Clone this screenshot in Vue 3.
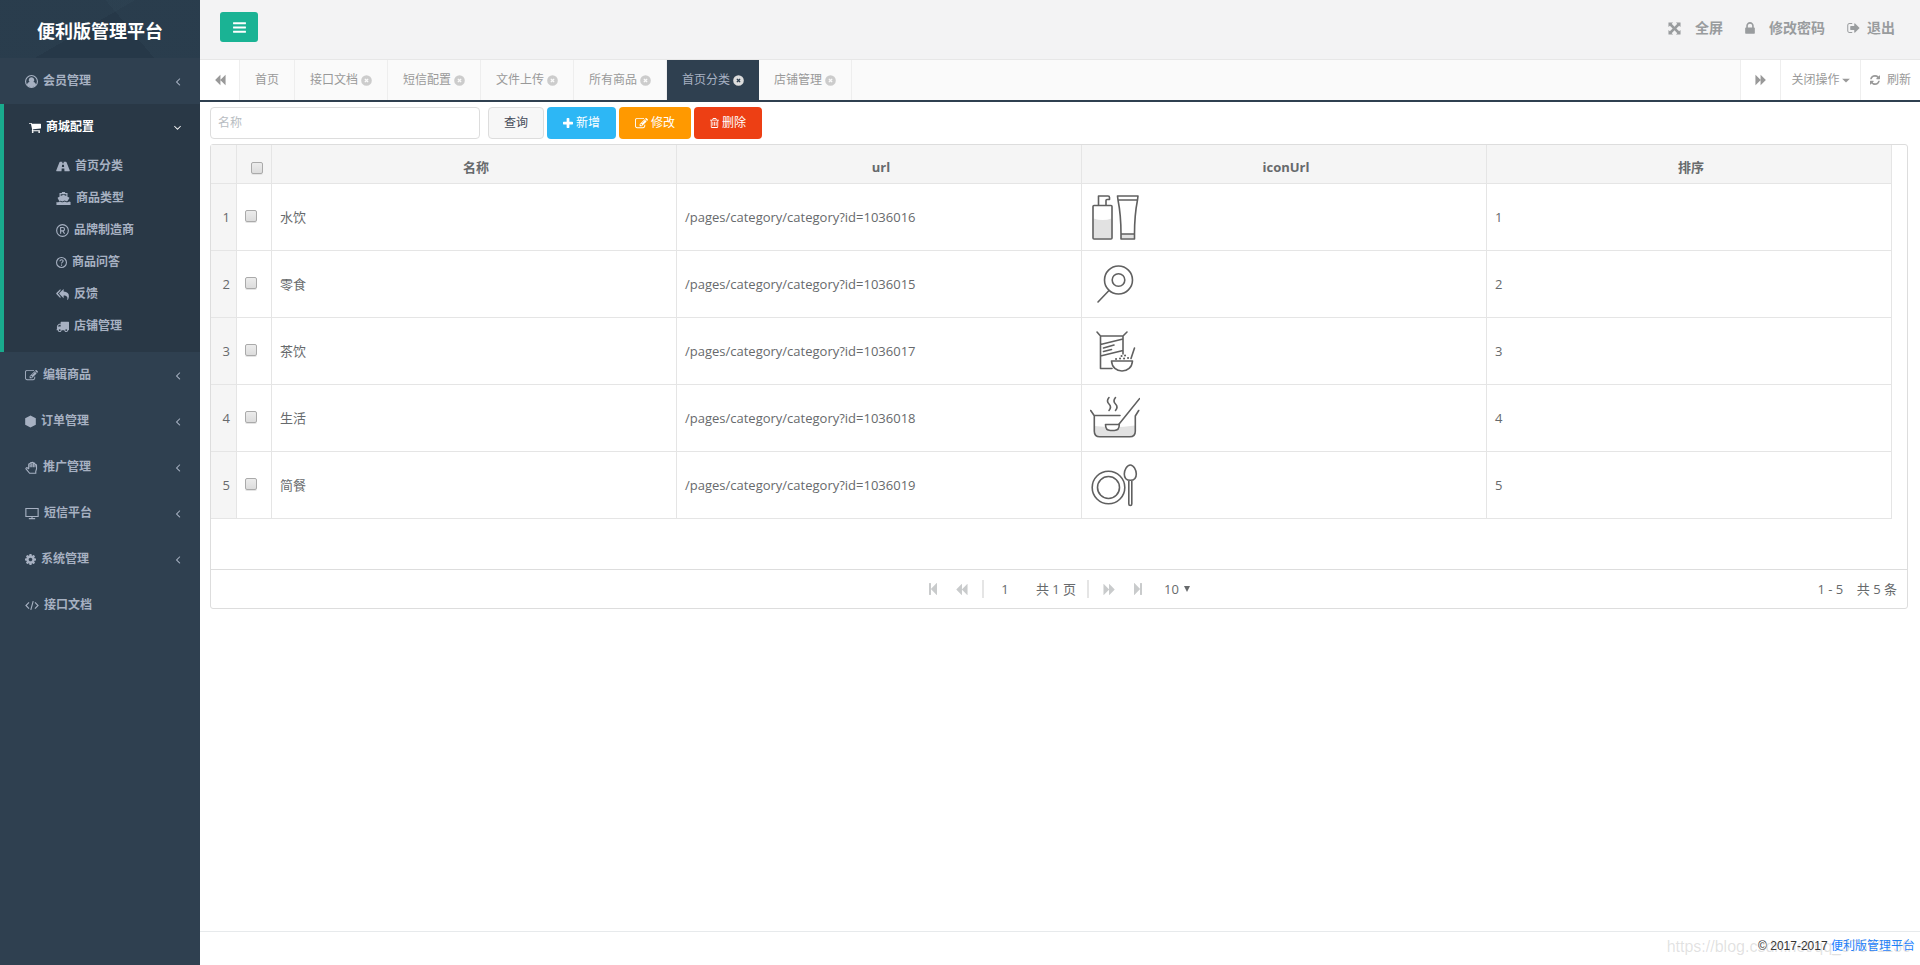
<script setup>
import { h, ref } from 'vue'

/* box: viewBox, d: filled shape, s: stroked shape */
const glyphs = {
  bars: { box: '128 0 1536 1792', d: 'M1664 1344v128q0 26-19 45t-45 19h-1408q-26 0-45-19t-19-45v-128q0-26 19-45t45-19h1408q26 0 45 19t19 45zm0-512v128q0 26-19 45t-45 19h-1408q-26 0-45-19t-19-45v-128q0-26 19-45t45-19h1408q26 0 45 19t19 45zm0-512v128q0 26-19 45t-45 19h-1408q-26 0-45-19t-19-45v-128q0-26 19-45t45-19h1408q26 0 45 19t19 45z' },
  backward: { box: '0 0 1792 1792', d: 'M1683 141q19-19 32-13t13 32v1472q0 26-13 32t-32-13l-710-710q-9-9-13-19v710q0 26-13 32t-32-13l-710-710q-19-19-19-45t19-45l710-710q19-19 32-13t13 32v710q4-10 13-19z' },
  forward: { box: '0 0 1792 1792', d: 'M109 1651q-19 19-32 13t-13-32v-1472q0-26 13-32t32 13l710 710q9 9 13 19v-710q0-26 13-32t32 13l710 710q19 19 19 45t-19 45l-710 710q-19 19-32 13t-13-32v-710q-4 10-13 19z' },
  first: { box: '384 0 1024 1792', d: 'M1363 141q19-19 32-13t13 32v1472q0 26-13 32t-32-13l-710-710q-9-9-13-19v678q0 26-19 45t-45 19h-128q-26 0-45-19t-19-45v-1408q0-26 19-45t45-19h128q26 0 45 19t19 45v678q4-10 13-19z' },
  last: { box: '384 0 1024 1792', d: 'M429 1651q-19 19-32 13t-13-32v-1472q0-26 13-32t32 13l710 710q9 9 13 19v-678q0-26 19-45t45-19h128q26 0 45 19t19 45v1408q0 26-19 45t-45 19h-128q-26 0-45-19t-19-45v-678q-4 10-13 19z' },
  close: { box: '0 0 12 14', d: 'M6 1.200a5.800 5.800 0 1 1 0 11.600A5.800 5.800 0 0 1 6 1.200zM6 6L4.700 4.700 3.700 5.700 5 7 3.700 8.300l1 1L6 8l1.300 1.300 1-1L7 7l1.300-1.300-1-1z' },
  lock: { box: '320 0 1152 1792', d: 'M640 768h512v-192q0-106-75-181t-181-75-181 75-75 181v192zm832 96v576q0 40-28 68t-68 28h-960q-40 0-68-28t-28-68v-576q0-40 28-68t68-28h32v-192q0-184 132-316t316-132 316 132 132 316v192h32q40 0 68 28t28 68z' },
  signout: { box: '64 0 1600 1792', d: 'M704 1440q0 4 1 20t.5 26.5-3 23.5-10 19.5-20.5 6.5h-320q-119 0-203.5-84.5t-84.5-203.5v-704q0-119 84.500-203.500t203.500-84.500h320q13 0 22.500 9.500t9.500 22.500q0 4 1 20t.5 26.500-3 23.500-10 19.500-20.500 6.500h-320q-66 0-113 47t-47 113v704q0 66 47 113t113 47h312l11.500 1 11.500 3 8 5.500 7 9 2 13.500zm928-544q0 26-19 45l-544 544q-19 19-45 19t-45-19-19-45v-288h-448q-26 0-45-19t-19-45v-384q0-26 19-45t45-19h448v-288q0-26 19-45t45-19 45 19l544 544q19 19 19 45z' },
  refresh: { box: '128 0 1536 1792', d: 'M1639 1056q0 5-1 7-64 268-268 434.5t-478 166.5q-146 0-282.5-55t-243.5-157l-129 129q-19 19-45 19t-45-19-19-45v-448q0-26 19-45t45-19h448q26 0 45 19t19 45-19 45l-137 137q71 66 161 102t187 36q134 0 250-65t186-179q11-17 53-117 8-23 30-23h192q13 0 22.5 9.5t9.5 22.5zm25-800v448q0 26-19 45t-45 19h-448q-26 0-45-19t-19-45 19-45l138-138q-148-137-349-137-134 0-250 65t-186 179q-11 17-53 117-8 23-30 23h-199q-13 0-22.5-9.5t-9.5-22.5v-7q65-268 270-434.5t480-166.5q146 0 284 55.5t245 156.5l130-129q19-19 45-19t45 19 19 45z' },
  cart: { box: '64 0 1664 1792', d: 'M704 1536q0 52-38 90t-90 38-90-38-38-90 38-90 90-38 90 38 38 90zm896 0q0 52-38 90t-90 38-90-38-38-90 38-90 90-38 90 38 38 90zm128-1088v512q0 24-16.5 42.5t-40.5 21.5l-1044 122q13 60 13 70 0 16-24 64h920q26 0 45 19t19 45-19 45-45 19h-1024q-26 0-45-19t-19-45q0-11 8-31.5t16-36 21.5-40 15.5-29.5l-177-823h-204q-26 0-45-19t-19-45 19-45 45-19h256q16 0 28.5 6.5t19.5 15.5 13 24.5 8 26 5.5 29.5 4.5 26h1201q26 0 45 19t19 45z' },
  edit: { box: '0 0 1792 1792', d: 'M888 1184l116-116-152-152-116 116v56h96v96h56zm440-720q-16-16-33 1l-350 350q-17 17-1 33t33-1l350-350q17-17 1-33zm80 594v190q0 119-84.5 203.5t-203.5 84.5h-832q-119 0-203.5-84.5t-84.5-203.5v-832q0-119 84.5-203.5t203.5-84.5h832q63 0 117 25 15 7 18 23 3 17-9 29l-49 49q-14 14-32 8-23-6-45-6h-832q-66 0-113 47t-47 113v832q0 66 47 113t113 47h832q66 0 113-47t47-113v-126q0-13 9-22l64-64q15-15 35-7t20 29zm-96-738l288 288-672 672h-288v-288zm444 132l-92 92-288-288 92-92q28-28 68-28t68 28l152 152q28 28 28 68t-28 68z' },
  plus: { box: '192 0 1408 1792', d: 'M1600 736v192q0 40-28 68t-68 28h-416v416q0 40-28 68t-68 28h-192q-40 0-68-28t-28-68v-416h-416q-40 0-68-28t-28-68v-192q0-40 28-68t68-28h416v-416q0-40 28-68t68-28h192q40 0 68 28t28 68v416h416q40 0 68 28t28 68z' },
  trash: { box: '192 0 1408 1792', d: 'M704 736v576q0 14-9 23t-23 9h-64q-14 0-23-9t-9-23v-576q0-14 9-23t23-9h64q14 0 23 9t9 23zm256 0v576q0 14-9 23t-23 9h-64q-14 0-23-9t-9-23v-576q0-14 9-23t23-9h64q14 0 23 9t9 23zm256 0v576q0 14-9 23t-23 9h-64q-14 0-23-9t-9-23v-576q0-14 9-23t23-9h64q14 0 23 9t9 23zm128 724v-948h-896v948q0 22 7 40.5t14.5 27 10.5 8.5h832q3 0 10.5-8.5t14.5-27 7-40.5zm-672-1076h448l-48-117q-7-9-17-11h-317q-10 2-17 11zm928 32v64q0 14-9 23t-23 9h-96v948q0 83-47 143.5t-113 60.5h-832q-66 0-113-58.5t-47-141.5v-952h-96q-14 0-23-9t-9-23v-64q0-14 9-23t23-9h309l70-167q15-37 54-63t79-26h320q40 0 79 26t54 63l70 167h309q14 0 23 9t9 23z' },
  left: { box: '512 0 768 1792', d: 'M1203 544q0 13-10 23l-393 393 393 393q10 10 10 23t-10 23l-50 50q-10 10-23 10t-23-10l-466-466q-10-10-10-23t10-23l466-466q10-10 23-10t23 10l50 50q10 10 10 23z' },
  down: { box: '384 0 1024 1792', d: 'M1395 736q0 13-10 23l-466 466q-10 10-23 10t-23-10l-466-466q-10-10-10-23t10-23l50-50q10-10 23-10t23 10l393 393 393-393q10-10 23-10t23 10l50 50q10 10 10 23z' },
  truck: { box: '0 0 1792 1792', d: 'M640 1408q0-52-38-90t-90-38-90 38-38 90 38 90 90 38 90-38 38-90zm-384-512h384v-256h-158q-13 0-22 9l-195 195q-9 9-9 22v30zm1280 512q0-52-38-90t-90-38-90 38-38 90 38 90 90 38 90-38 38-90zm256-1088v1024q0 15-4 26.5t-13.5 18.5-16.5 11.5-23.5 6-22.5 2-25.5 0-22.5-.5q0 106-75 181t-181 75-181-75-75-181h-384q0 106-75 181t-181 75-181-75-75-181h-64q-3 0-22.5.5t-25.5 0-22.5-2-23.5-6-16.5-11.5-13.5-18.5-4-26.5q0-26 19-45t45-19v-320q0-8-.5-35t0-38 2.5-34.5 6.5-37 14-30.5 22.5-30l198-198q19-19 50.5-32t58.5-13h160v-192q0-26 19-45t45-19h1024q26 0 45 19t19 45z' },
  cog: { box: '128 0 1536 1792', d: 'M1152 896q0-106-75-181t-181-75-181 75-75 181 75 181 181 75 181-75 75-181zm512-109v222q0 12-8 23t-20 13l-185 28q-19 54-39 91 35 50 107 138 10 12 10 25t-9 23q-27 37-99 108t-94 71q-12 0-26-9l-138-108q-44 23-91 38-16 136-29 186-7 28-36 28h-222q-14 0-24.5-8.5t-11.5-21.5l-28-184q-49-16-90-37l-141 107q-10 9-25 9-14 0-25-11-126-114-165-168-7-10-7-23 0-12 8-23 15-21 51-66.5t54-70.5q-27-50-41-99l-183-27q-13-2-21-12.5t-8-23.5v-222q0-12 8-23t19-13l186-28q14-46 39-92-40-57-107-138-10-12-10-24 0-10 9-23 26-36 98.5-107.5t94.5-71.5q13 0 26 10l138 107q44-23 91-38 16-136 29-186 7-28 36-28h222q14 0 24.5 8.5t11.5 21.5l28 184q49 16 90 37l142-107q9-9 24-9 13 0 25 10 129 119 165 170 7 8 7 22 0 12-8 23-15 21-51 66.5t-54 70.5q26 50 41 98l183 28q13 2 21 12.5t8 23.5z' },
  expand: { box: '0 0 14 14', d: 'M.5.5h5L4 2 7 5l3-3L8.500.5h5v5L12 4 9 7l3 3 1.500-1.500v5h-5L10 12 7 9l-3 3 1.500 1.500h-5v-5L2 10l3-3-3-3L.5 5.500z' },
  user: { box: '0 0 14 14', s: 'M13.4 7A6.4 6.4 0 1 1 .6 7a6.4 6.4 0 0 1 12.8 0z', d: 'M7 2.4a3 3 0 0 1 2 5.200c1.700.3 2.700 1.400 2.900 3.200-2.500 2.900-7.300 2.900-9.800 0 .2-1.800 1.200-2.900 2.900-3.200A3 3 0 0 1 7 2.400z' },
  road: { box: '0 0 15 14', d: 'M4.3 2h2.5l-.1 1.6h1.6L8.200 2h2.500q.4 0 .6.4l3.500 8.800q.200.8-.5.8H9.100l-.2-2.800H6.100L5.900 12H.7Q0 12 .2 11.200L3.700 2.400Q3.900 2 4.300 2zM6.500 5l-.2 2.600h2.400L8.500 5z' },
  ship: { box: '0 0 16 14', d: 'M6.300 0h3.400v1.200h2.600v3.800l1.700.8q.5.3.2.8l-1.700 2.900q-1 1-2 .2-1.200-.9-2.500 0t-2.500 0q-1-.8-2 .2L1.800 6.600Q1.500 6.100 2 5.800l1.700-.8V1.200h2.600zM5 2.500v1.900l3-1.400 3 1.400V2.500zM.4 10.700q1.300.9 2.500 0 1.300-.9 2.600 0 1.200.9 2.500 0 1.300-.9 2.500 0 1.300.9 2.600 0 1.200-.9 2.500 0V14H.4z' },
  registered: { box: '0 0 14 14', s: 'M13.300 7A6.300 6.300 0 1 1 .7 7a6.300 6.300 0 0 1 12.600 0zM5 10.500V3.700h2.300a1.800 1.800 0 0 1 0 3.700H5.300M7.300 7.400l1.900 3.100' },
  question: { box: '0 0 12 14', s: 'M11.400 7A5.400 5.400 0 1 1 .6 7a5.400 5.400 0 0 1 10.800 0zM4.200 5.600C4.500 3.500 7.900 3.700 7.800 5.400 7.700 6.600 6 6.600 6 8.200M6 9.200v1.300' },
  reply: { box: '0 0 14 14', d: 'M4.800 1v1.900L2 6l2.800 3.100V11L.4 6.500Q0 6 .4 5.500zM8.200 1v2.700c4 .3 5.800 2.100 5.700 5.100 0 1.500-.6 2.900-1.300 4-.2.200-.5.1-.4-.2.5-3-.6-4.200-4-4.400V11L3.700 6.500q-.4-.5 0-1z' },
  cube: { box: '0 0 12 14', d: 'M6 .5L11.800 3.500v7L6 13.500.2 10.500v-7z' },
  hand: { box: '0 0 14 14', s: 'M4 8.500V3.800c0-1.200 1.600-1.200 1.600 0V2.600c0-1.200 1.700-1.200 1.700 0v-.4c0-1.100 1.700-1.100 1.700 0v.9c0-1.100 1.700-1.100 1.700 0v1.600c0-1 1.700-1.100 1.700.1v3.700l-.8 2.700v2H5L1.300 8.800C.5 7.600 1.900 6.700 2.900 7.600L4 8.600M5.600 4v2.800M7.300 3v3.800M9 3v3.800M10.700 4.500v2.300' },
  tv: { box: '0 0 15 14', s: 'M.9 1.600h13.200v8.600H.9zM7.500 10.200v2M4.100 12.500h6.800' },
  code: { box: '0 0 15 14', s: 'M4.300 3.700L1 7l3.300 3.300M10.700 3.700L14 7l-3.300 3.300M8.800 2.300L6.200 11.700' },
  caret: { box: '0 0 9 14', d: 'M0 5.500h9L4.500 10z' },
  triangle: { box: '0 0 6 6', d: 'M0 0h6L3 6z' },
}

const Icon = (props) => {
  const g = glyphs[props.name]
  const [, , w, hgt] = g.box.split(' ').map(Number)
  return h('svg', {
    class: 'icon',
    viewBox: g.box,
    height: props.size,
    width: Math.round((props.size * w) / hgt),
    'aria-hidden': 'true',
  }, [
    g.d && h('path', { d: g.d, fill: 'currentColor', 'fill-rule': g.box.includes('1792') ? 'nonzero' : 'evenodd' }),
    g.s && h('path', { d: g.s, fill: 'none', stroke: 'currentColor', 'stroke-width': 1.2 }),
  ])
}
Icon.props = { name: String, size: { type: Number, default: 13 } }

const menu = [
  { icon: 'user', text: '会员管理', more: true },
  {
    icon: 'cart', text: '商城配置', open: true, children: [
      { icon: 'road', text: '首页分类' },
      { icon: 'ship', text: '商品类型' },
      { icon: 'registered', text: '品牌制造商' },
      { icon: 'question', text: '商品问答' },
      { icon: 'reply', text: '反馈' },
      { icon: 'truck', text: '店铺管理' },
    ],
  },
  { icon: 'edit', text: '编辑商品', more: true },
  { icon: 'cube', text: '订单管理', more: true },
  { icon: 'hand', text: '推广管理', more: true },
  { icon: 'tv', text: '短信平台', more: true },
  { icon: 'cog', text: '系统管理', more: true },
  { icon: 'code', text: '接口文档' },
]

const tabs = [
  { text: '首页', fixed: true },
  { text: '接口文档' },
  { text: '短信配置' },
  { text: '文件上传' },
  { text: '所有商品' },
  { text: '首页分类', active: true },
  { text: '店铺管理' },
]

const rows = [
  { id: 1, name: '水饮', url: '/pages/category/category?id=1036016', sort: 1 },
  { id: 2, name: '零食', url: '/pages/category/category?id=1036015', sort: 2 },
  { id: 3, name: '茶饮', url: '/pages/category/category?id=1036017', sort: 3 },
  { id: 4, name: '生活', url: '/pages/category/category?id=1036018', sort: 4 },
  { id: 5, name: '简餐', url: '/pages/category/category?id=1036019', sort: 5 },
]

const keyword = ref('')
const page = ref('1')
const pageSize = ref('10')
</script>

<template>
  <div class="app">
    <aside class="sidebar">
      <div class="brand">便利版管理平台</div>
      <nav>
        <ul class="menu">
          <li v-for="item in menu" :key="item.text" :class="{ open: item.open }">
            <a href="#" class="menu-link">
              <Icon :name="item.icon" />
              <span class="menu-text">{{ item.text }}</span>
              <Icon v-if="item.more" name="left" :size="13" />
              <Icon v-if="item.open" name="down" :size="13" />
            </a>
            <ul v-if="item.children" class="submenu">
              <li v-for="sub in item.children" :key="sub.text">
                <a href="#" class="submenu-link"><Icon :name="sub.icon" /><span>{{ sub.text }}</span></a>
              </li>
            </ul>
          </li>
        </ul>
      </nav>
    </aside>

    <div class="page">
      <header class="topbar">
        <button type="button" class="toggle" aria-label="菜单"><Icon name="bars" :size="15" /></button>
        <div class="account">
          <a href="#" class="wide"><Icon name="expand" :size="13" />全屏</a>
          <a href="#" class="wide"><Icon name="lock" :size="15" />修改密码</a>
          <a href="#"><Icon name="signout" :size="14" />退出</a>
        </div>
      </header>

      <div class="tabbar">
        <button type="button" class="scroll" aria-label="向左"><Icon name="backward" :size="12" /></button>
        <nav class="tabs">
          <a v-for="tab in tabs" :key="tab.text" href="#" class="tab" :class="{ active: tab.active }">
            {{ tab.text }}<Icon v-if="!tab.fixed" name="close" />
          </a>
        </nav>
        <button type="button" class="scroll right" aria-label="向右"><Icon name="forward" :size="12" /></button>
        <button type="button" class="closer">关闭操作<Icon name="caret" :size="12" /></button>
        <button type="button" class="reload"><Icon name="refresh" :size="12" />刷新</button>
      </div>

      <main class="content">
        <form class="tools" @submit.prevent>
          <input v-model="keyword" type="text" class="search" placeholder="名称" aria-label="名称">
          <button type="submit" class="btn plain">查询</button>
          <button type="button" class="btn add"><Icon name="plus" />新增</button>
          <button type="button" class="btn modify"><Icon name="edit" />修改</button>
          <button type="button" class="btn remove"><Icon name="trash" :size="12" />删除</button>
        </form>

        <section class="grid">
          <div class="grid-body">
            <table>
              <colgroup><col class="c-num"><col class="c-check"><col><col><col><col></colgroup>
              <thead>
                <tr>
                  <th></th>
                  <th class="check-all"><input type="checkbox" aria-label="全选"></th>
                  <th>名称</th>
                  <th>url</th>
                  <th>iconUrl</th>
                  <th>排序</th>
                </tr>
              </thead>
              <tbody>
                <tr v-for="row in rows" :key="row.id">
                  <td class="num">{{ row.id }}</td>
                  <td class="check"><input type="checkbox" :aria-label="row.name"></td>
                  <td>{{ row.name }}</td>
                  <td>{{ row.url }}</td>
                  <td>
                    <svg class="picture" viewBox="0 0 50 50" width="50" height="50" aria-hidden="true">
                      <g v-if="row.id === 1">
                        <path class="shade" d="M3.500 26.500q9.500 3 18 0V46.500h-18zM31 42h13.500v4.500H31z" />
                        <path d="M4 13.500h17a1 1 0 0 1 1 1V46a1 1 0 0 1-1 1H4a1 1 0 0 1-1-1V14.500a1 1 0 0 1 1-1zM8.500 13.500V4h9.500q1.500 0 1.500 1.500v2H17q-1 0-1 1v5M27.500 4h20.500l-.5 4H28zM28 8q3 15 3 34h13.500q0-19 3-34M31 42v5h13.500v-5" />
                      </g>
                      <g v-else-if="row.id === 2">
                        <circle cx="28.500" cy="21" r="14" /><circle cx="28.500" cy="21" r="6.300" />
                        <path d="M19 31.500L8 43" />
                      </g>
                      <g v-else-if="row.id === 3">
                        <path d="M7 6l3.500 4v32.500h11.500M37 6l-4 4v18M10.500 10H33M10.500 18.500L33 13M10.500 30L33 24.500M13.500 22l10.500-3M13.500 25.500l8-2M44.500 22l-3.500 10.500" />
                        <path d="M21.500 35h21c-.5 6.500-5 10-10.500 10s-10-3.500-10.500-10z" />
                        <path class="dots" d="M26 33h.1M30 32.500h.1M31.500 30h.1M34 32.500h.1M35 29.500h.1M38 32h.1" />
                      </g>
                      <g v-else-if="row.id === 4">
                        <path class="shade" d="M4.500 33q20 2.500 40.500-.500V40q-1 3.500-5 3.500H10q-5 0-5.500-4z" />
                        <path d="M.7 17.500l3.600 5.200v15.500q0 5.500 5.500 5.500h30q5.500 0 5.500-5.500V23l3.400-5.500M4.300 22.500H30M49.500 5.700L28.700 31.500" />
                        <path class="white" d="M15.500 31.500h13.800q0 6-5 6h-4q-4.800 0-4.800-6z" />
                        <path d="M19 4.500q-3 3.500 0 6.500t0 6.500M25.500 4.500q-3 3.500 0 6.500t0 6.500" />
                      </g>
                      <g v-else>
                        <circle cx="18.500" cy="27.500" r="16.300" /><circle cx="18.500" cy="27.500" r="11" />
                        <path d="M40.300 5c3.500 0 6 5.500 6 9 0 4-2.500 6.300-6 6.300s-6-2.300-6-6.300c0-3.500 2.500-9 6-9zM38.800 20.500V44q0 1.500 1.500 1.500T41.800 44V20.500" />
                      </g>
                    </svg>
                  </td>
                  <td>{{ row.sort }}</td>
                </tr>
              </tbody>
            </table>
          </div>

          <footer class="pager">
            <span></span>
            <div class="pages">
              <button type="button" aria-label="首页"><Icon name="first" :size="14" /></button>
              <button type="button" aria-label="上一页"><Icon name="backward" /></button>
              <i class="sep"></i>
              <input v-model="page" type="text" class="page-no" aria-label="页码">
              <span class="total">共 1 页</span>
              <i class="sep"></i>
              <button type="button" aria-label="下一页"><Icon name="forward" /></button>
              <button type="button" aria-label="尾页"><Icon name="last" :size="14" /></button>
              <label class="size">
                <select v-model="pageSize" aria-label="每页条数"><option>10</option><option>30</option><option>50</option></select>
                <Icon name="triangle" :size="6" />
              </label>
            </div>
            <span class="summary">1 - 5&nbsp;&nbsp;&nbsp; 共 5 条</span>
          </footer>
        </section>
      </main>

      <footer class="foot">
        © 2017-2017 <a href="#">便利版管理平台</a>
        <span class="mark">https://blog.csdn.net/qq_37591136</span>
      </footer>
    </div>
  </div>
</template>

<style>
body {
  margin: 0;
  background: #fff;
}
</style>

<style scoped>
* {
  box-sizing: border-box;
}
.app {
  display: flex;
  min-height: 100vh;
  font: 13px/18px "Open Sans", "Noto Sans CJK SC", sans-serif;
  color: #676a6c;
}
a {
  color: inherit;
  text-decoration: none;
}
ul {
  margin: 0;
  padding: 0;
  list-style: none;
}
button,
input,
select {
  font: inherit;
  color: inherit;
  margin: 0;
}
button {
  display: flex;
  align-items: center;
  justify-content: center;
  padding: 0;
  border: 0;
  background: none;
  white-space: nowrap;
}
.icon {
  flex: none;
  display: block;
}

/* sidebar */
.sidebar {
  flex: none;
  width: 200px;
  background: #2f4050;
  font-size: 12px;
  font-weight: 700;
  color: #a7b1c2;
}
.brand {
  height: 58px;
  padding-top: 18px;
  background:
    linear-gradient(50deg, transparent 62%, rgba(50, 72, 88, 0.3) 62%),
    linear-gradient(150deg, rgba(50, 72, 88, 0.3) 45%, transparent 45%),
    #263848;
  color: #fff;
  font-size: 18px;
  line-height: 26px;
  text-align: center;
}
.menu-link {
  display: flex;
  align-items: center;
  gap: 5px;
  height: 46px;
  padding: 0 19px 0 25px;
}
.menu-text {
  flex: 1;
}
.open {
  border-left: 4px solid #19aa8d;
  background: #293846;
  padding-bottom: 10px;
}
.open > .menu-link {
  color: #fff;
}
.submenu-link {
  display: flex;
  align-items: center;
  gap: 5px;
  height: 32px;
  padding-left: 52px;
}

/* header */
.page {
  flex: 1;
  min-width: 0;
  display: flex;
  flex-direction: column;
}
.topbar {
  display: flex;
  align-items: flex-start;
  justify-content: space-between;
  height: 60px;
  padding: 12px 25px 0 20px;
  border-bottom: 1px solid #e7e7e7;
  background: #f3f3f4;
}
.toggle {
  width: 38px;
  height: 30px;
  border-radius: 3px;
  background: #1ab394;
  color: #fff;
}
.account {
  display: flex;
  gap: 22px;
  padding-top: 6px;
  font-size: 14px;
  line-height: 20px;
  font-weight: 700;
  color: #999c9e;
}
.account a {
  display: flex;
  align-items: center;
  gap: 7px;
}
.account .wide {
  gap: 14px;
}
.tabbar {
  display: flex;
  height: 42px;
  border-bottom: 2px solid #2f4050;
  font-size: 12px;
  color: #999;
}
.scroll {
  width: 40px;
  border-right: 1px solid #eee;
}
.scroll.right {
  border-left: 1px solid #eee;
  width: 41px;
}
.tabs {
  flex: 1;
  display: flex;
  background: #fafafa;
}
.tab {
  display: flex;
  align-items: center;
  gap: 3px;
  padding: 0 15px;
  border-right: 1px solid #eee;
}
.tab .icon {
  color: #ccc;
}
.tab.active {
  border-right: 0;
  background: #2f4050;
  color: #a7b1c2;
}
.tab.active .icon {
  color: #ddd;
}
.closer {
  width: 80px;
  gap: 2px;
  border-right: 1px solid #eee;
}
.reload {
  width: 59px;
  gap: 7px;
}

/* toolbar */
.content {
  flex: 1;
  padding: 5px 12px 0 10px;
}
.tools {
  display: flex;
  gap: 3px;
  height: 32px;
  margin-bottom: 5px;
  font-size: 12px;
}
.search {
  width: 270px;
  margin-right: 5px;
  padding: 0 7px;
  border: 1px solid #ddd;
  border-radius: 4px;
  background: #fff;
}
.search::placeholder {
  color: #b8bdc2;
}
.btn {
  gap: 3px;
  padding: 0 16px;
  border-radius: 4px;
  color: #fff;
}
.plain {
  padding: 0 15px;
  border: 1px solid #ddd;
  background: #f7f7f7;
  color: #444a58;
}
.add {
  background: #2db7f5;
}
.modify {
  background: #f90;
}
.remove {
  background: #ed3f14;
}

/* grid */
.grid {
  border: 1px solid #ddd;
  border-radius: 3px;
}
.grid-body {
  min-height: 424px;
  padding-right: 15px;
}
table {
  width: 100%;
  table-layout: fixed;
  border-spacing: 0;
}
.c-num {
  width: 26px;
}
.c-check {
  width: 35px;
}
th,
td {
  border-right: 1px solid #e5e5e5;
  border-bottom: 1px solid #e5e5e5;
}
th {
  height: 39px;
  padding: 5px 0 0 4px;
  background: #f5f5f5;
  font-weight: 700;
  text-align: center;
}
td {
  height: 67px;
  padding: 0 8px;
}
td.num {
  padding: 0 6px 0 0;
  background: #f5f5f5;
  text-align: right;
}
td.check {
  padding-bottom: 2px;
}
input[type="checkbox"] {
  appearance: none;
  display: block;
  width: 12px;
  height: 12px;
  border: 1px solid #aaa;
  border-radius: 2px;
  background: linear-gradient(#ececec, #dcdcdc);
  box-shadow: 0 1px 0 #e4e4e4;
}
th.check-all {
  padding: 7px 0 0 14px;
}
.picture {
  display: block;
  fill: none;
  stroke: #606060;
  stroke-width: 1.6;
  stroke-linecap: round;
  stroke-linejoin: round;
}
.shade {
  fill: #e2e2e2;
  stroke: none;
}
.white {
  fill: #fff;
}
.dots {
  stroke-width: 2;
}

/* pager */
.pager {
  display: grid;
  grid-template-columns: 1fr auto 1fr;
  align-items: center;
  height: 39px;
  border-top: 1px solid #ddd;
}
.pages {
  display: flex;
  align-items: center;
  padding-right: 8px;
}
.pages button {
  height: 24px;
  padding: 0 9px;
  color: #c9cbcc;
}
.sep {
  width: 2px;
  height: 18px;
  margin: 0 5px;
  background: #e5e5e5;
}
.page-no {
  width: 32px;
  padding: 0;
  border: 0;
  background: none;
  text-align: center;
}
.total {
  padding: 0 6px 0 15px;
}
.size {
  display: flex;
  align-items: center;
  gap: 5px;
  padding: 0 0 0 13px;
}
.size select {
  appearance: none;
  padding: 0;
  border: 0;
  background: none;
}
.summary {
  padding-right: 10px;
  text-align: right;
}

/* footer */
.foot {
  position: relative;
  height: 34px;
  padding: 5px 5px 0 0;
  border-top: 1px solid #e7eaec;
  font: 12px/18px "Liberation Sans", "Noto Sans CJK SC", sans-serif;
  color: #333;
  text-align: right;
}
.foot a {
  color: #1a82ff;
}
.mark {
  position: absolute;
  right: 9px;
  top: 6px;
  font-size: 16px;
  color: rgba(120, 120, 120, 0.22);
}
</style>
